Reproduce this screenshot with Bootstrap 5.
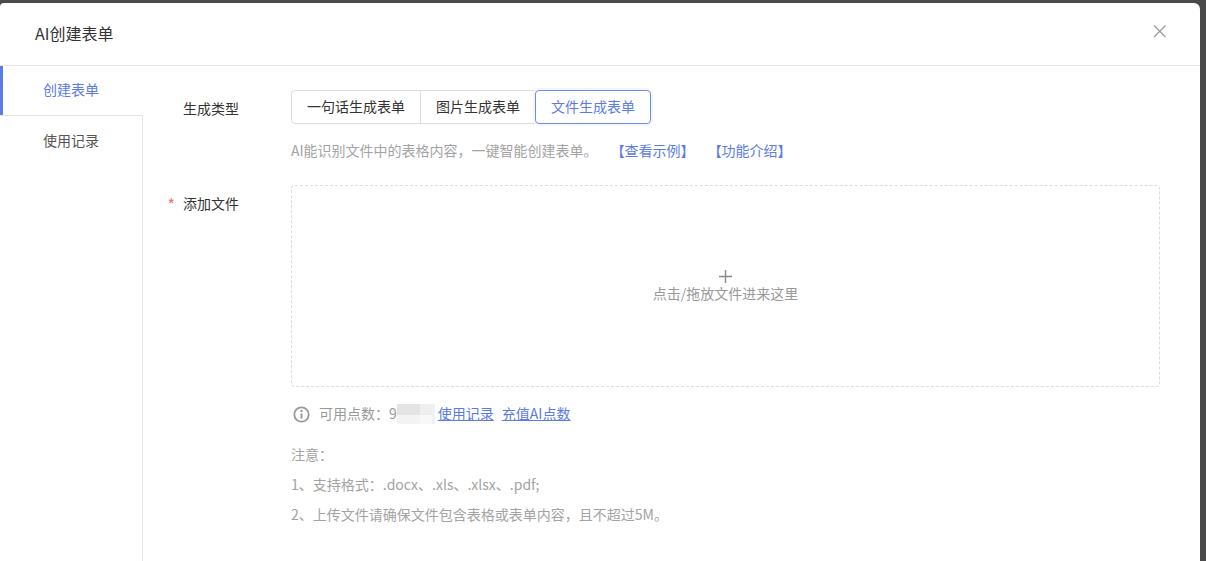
<!DOCTYPE html>
<html lang="zh">
<head>
<meta charset="utf-8">
<title>AI创建表单</title>
<link href="https://cdn.jsdelivr.net/npm/bootstrap@5.3.0/dist/css/bootstrap.min.css" rel="stylesheet">
<style>
html,body{height:100%;overflow:hidden}
body{background:#4a4a4a;font-family:"Noto Sans CJK SC","Liberation Sans",sans-serif;font-size:14px;color:#333;padding:3px 6px 0 0}
.ai-modal{background:#fff;height:558px;border-radius:4px 6px 0 0;overflow:hidden}
.ai-head{height:63px;border-bottom:1px solid #e8e8e8;padding:19px 33px 0 35px;font-size:16px;line-height:22px;color:#333}
.ai-close{width:15px;height:15px;margin-top:2px;color:#999;padding:0;border:0;background:none;line-height:0}
.ai-side{width:143px;flex:none}
.ai-tab{height:49px;line-height:46px;color:#5b7be6;border-left:3px solid #5b7be6;padding-left:40px}
.ai-tab-off{flex:1;border-top:1px solid #e4e4e4;border-right:1px solid #e4e4e4;padding:13px 0 0 43px;line-height:22px;color:#555}
.ai-form{padding:24px 40px 0 0;min-width:0}
.ai-label{width:148px;flex:none;text-align:right;padding-right:52px;color:#333;line-height:34px}
.ai-label-type{padding-top:1px;height:34px}
.ai-label-file{line-height:22px;padding-top:6px;margin-top:62px;white-space:nowrap}
.ai-star{color:#f56c6c;margin-right:8px;font-size:16px;line-height:16px;vertical-align:-2px}
.ai-types{height:34px}
.ai-type{height:34px;padding:0 15px;line-height:30px;border:1px solid #dcdcdc;background:#fff;color:#333;font-size:14px;white-space:nowrap}
.ai-type:first-child{border-radius:4px 0 0 4px;width:130px}
.ai-type:nth-child(2){border-left:0;width:114px}
.ai-type.ai-on{width:116px;border:1px solid #6f8ce8;color:#5b7be6;border-radius:4px;box-shadow:0 0 0 2px #f4f6fd}
.ai-hint{color:#a3a3a3;line-height:22px;margin-top:15px}
.ai-links{margin-left:13px;gap:13px;color:#5b7be6}
.ai-drop{height:202px;margin-top:24px;border:1px dashed #dcdcdc;border-radius:4px;color:#999;line-height:16px;padding-bottom:1px}
.ai-plus{line-height:0;margin-bottom:2px}
.ai-points{margin-top:15px;line-height:22px;color:#999}
.ai-info{margin-right:9px;flex:none;margin-left:2px}
.ai-txt{margin-bottom:2px}
.ai-mask{width:38px;height:20px;margin-right:3px;background:
  linear-gradient(90deg,#e4e4e4 0 23px,#eeeeee 23px 35px,#eef0fb 35px 38px) top/100% 11px no-repeat,
  linear-gradient(90deg,#f3f3f3 0 23px,#f8f8f8 23px 35px,#eef0fb 35px 38px) bottom/100% 9px no-repeat}
.ai-points a{color:#5b7be6;margin-right:8px;margin-bottom:2px}
.ai-notes{margin-top:13px;color:#a3a3a3;line-height:30px}
</style>
</head>
<body>
<div class="ai-modal d-flex flex-column">
  <div class="ai-head d-flex justify-content-between">
    <span>AI创建表单</span>
    <button class="ai-close" type="button" aria-label="关闭">
      <svg width="15" height="15" viewBox="0 0 15 15"><path d="M2 1.5 13.5 13M13.5 1.5 2 13" stroke="#999" stroke-width="1.2" fill="none"/></svg>
    </button>
  </div>
  <div class="d-flex flex-grow-1" style="min-height:0">
    <div class="ai-side d-flex flex-column">
      <div class="ai-tab">创建表单</div>
      <div class="ai-tab-off">使用记录</div>
    </div>
    <div class="ai-form d-flex flex-grow-1">
      <div class="d-flex flex-column">
        <div class="ai-label ai-label-type">生成类型</div>
        <div class="ai-label ai-label-file"><span class="ai-star">*</span>添加文件</div>
      </div>
      <div class="flex-grow-1">
        <div class="ai-types d-flex">
          <div class="ai-type">一句话生成表单</div>
          <div class="ai-type">图片生成表单</div>
          <div class="ai-type ai-on">文件生成表单</div>
        </div>
        <div class="ai-hint d-flex">
          <span>AI能识别文件中的表格内容，一键智能创建表单。</span>
          <span class="ai-links d-flex"><span>【查看示例】</span><span>【功能介绍】</span></span>
        </div>
        <div class="ai-drop d-flex flex-column align-items-center justify-content-center">
          <div class="ai-plus"><svg width="13" height="13" viewBox="0 0 13 13"><path d="M6.5 0v13M0 6.5h13" stroke="#888" stroke-width="1.4" fill="none"/></svg></div>
          <div>点击/拖放文件进来这里</div>
        </div>
        <div class="ai-points d-flex align-items-center">
          <svg class="ai-info" width="17" height="17" viewBox="0 0 17 17"><circle cx="8.5" cy="8.5" r="7.2" fill="none" stroke="#999" stroke-width="1.8"/><path d="M8.5 7.5v5" stroke="#999" stroke-width="2"/><circle cx="8.5" cy="5" r="1.2" fill="#999"/></svg>
          <span class="ai-txt">可用点数：9</span><span class="ai-mask"></span>
          <a href="#">使用记录</a><a href="#">充值AI点数</a>
        </div>
        <div class="ai-notes">
          <div>注意：</div>
          <div>1、支持格式：.docx、.xls、.xlsx、.pdf;</div>
          <div>2、上传文件请确保文件包含表格或表单内容，且不超过5M。</div>
        </div>
      </div>
    </div>
  </div>
</div>
</body>
</html>
